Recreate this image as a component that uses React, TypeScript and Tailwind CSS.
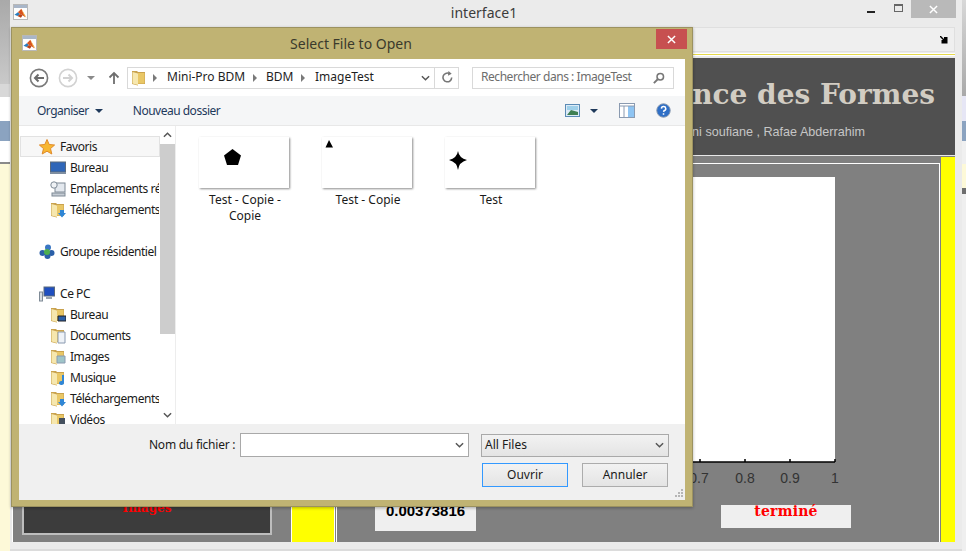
const ui = { fontFamily: '"Noto Sans", "Open Sans", sans-serif' };

function MatlabIcon({ className }: { className: string }) {
  return (
    <div className={className}>
      <div className="h-[3px] bg-[#a9b6c8]" />
      <svg viewBox="0 0 15 12" className="w-full h-[11px] bg-white">
        <path d="M0.5 7.5 L4.5 4.5 L7 6.5 L4 9 Z" fill="#2a7fc0" />
        <path d="M4.5 4.5 L8.5 0.5 L10.5 5 L13 10.5 L10 8 L7 6.5 Z" fill="#d9531e" />
        <path d="M8.5 0.5 L10.5 4 L14.5 11 L11.5 8 Z" fill="#f0a030" />
        <path d="M4 9 L7 6.5 L10 8 L8 11 Z" fill="#b8431a" />
      </svg>
    </div>
  );
}

function Folder({ overlay }: { overlay?: string }) {
  return (
    <svg viewBox="0 0 16 16" className="w-4 h-4 shrink-0">
      <path d="M1 1 H6 L7 2 H14 V14 H7 V15.5 L1 14 Z" fill="#c9a24e" />
      <path d="M7 3 H13.5 V13.5 H7 Z" fill="#e9c766" />
      <path d="M1.5 2 L7 3.5 V15 L1.5 13.5 Z" fill="#f6e7ae" />
      {overlay === "down" && <path d="M10 8 H14 V11 H16 L12 15.5 L8 11 H10 Z" fill="#2f86d6" />}
      {overlay === "desk" && <path d="M8 9 H16 V14 H8 Z" fill="#2a5fa8" stroke="#222" strokeWidth="1" />}
      {overlay === "doc" && <path d="M8 4 H15 V15 H8 Z" fill="#eef2f7" stroke="#8a9ab0" strokeWidth="1" />}
      {overlay === "img" && <path d="M7 7 H15 V14 H7 Z" fill="#9ec4c8" stroke="#8a9ab0" strokeWidth="1" />}
      {overlay === "music" && <path d="M12 5 H14 V13 A2.5 2 0 1 1 12 11 Z" fill="#2f86d6" />}
      {overlay === "video" && <path d="M9 6 H15 V15 H9 Z" fill="#44505e" />}
    </svg>
  );
}

function NavRow({ label, children, sub, selected }: { label: string; children: React.ReactNode; sub?: boolean; selected?: boolean }) {
  return (
    <div
      className={`h-[21px] flex items-center overflow-hidden whitespace-nowrap text-[12px] tracking-[-0.45px] text-[#1a1a1a] border ${
        selected ? "border-[#e2e2e2] bg-[#f7f7f7]" : "border-transparent"
      } ${sub ? "pl-[29px] gap-[4px]" : "pl-[18px] gap-[5px]"}`}
    >
      {children}
      <span>{label}</span>
    </div>
  );
}

function Thumb({ label, children }: { label: string; children: React.ReactNode }) {
  return (
    <div className="w-[94px] flex flex-col items-center">
      <svg viewBox="0 0 90 51" className="w-[90px] h-[51px] bg-white shadow-[1px_1px_2px_rgba(0,0,0,0.45)]">
        {children}
      </svg>
      <div className="mt-[4px] pl-[2px] text-center text-[12px] leading-[16px] text-[#1a1a1a]">{label}</div>
    </div>
  );
}

function Chevron() {
  return (
    <svg viewBox="0 0 10 6" className="w-[9px] h-[6px]">
      <path d="M1 1 L5 5 L9 1" fill="none" stroke="#555" strokeWidth="1.6" />
    </svg>
  );
}

function Crumb() {
  return <div className="w-0 h-0 border-y-[4px] border-y-transparent border-l-[4px] border-l-[#7a7a7a]" />;
}

function Dialog() {
  return (
    <div
      className="absolute left-[11px] top-[27px] w-[682px] h-[480px] flex flex-col bg-[#c0b373] border border-[#9c9260] shadow-[0_1px_3px_rgba(0,0,0,0.3)]"
      style={ui}
    >
      <div className="h-[31px] shrink-0 flex items-center justify-center relative">
        <MatlabIcon className="absolute left-[10px] top-[7px] w-[15px] border border-[#b8b8b8]" />
        <span className="text-[14px] text-[#3a3a2c] -ml-[2px]">Select File to Open</span>
        <div className="absolute right-[5px] top-[1px] w-[31px] h-[20px] bg-[#c75050] flex items-center justify-center">
          <svg viewBox="0 0 10 10" className="w-[9px] h-[9px]">
            <path d="M1 1 L9 9 M9 1 L1 9" stroke="#fff" strokeWidth="1.6" />
          </svg>
        </div>
      </div>

      <div className="mx-[7px] mb-[6px] flex-1 flex flex-col bg-white min-h-0">
        {/* address bar */}
        <div className="h-[37px] shrink-0 flex items-center pl-[10px] pr-[11px]">
          <svg viewBox="0 0 20 20" className="w-[20px] h-[20px]">
            <circle cx="10" cy="10" r="8.6" fill="none" stroke="#7a7a7a" strokeWidth="1.6" />
            <path d="M15 10 H6 M9.5 6.5 L6 10 L9.5 13.5" fill="none" stroke="#6c6c6c" strokeWidth="2" />
          </svg>
          <svg viewBox="0 0 20 20" className="w-[20px] h-[20px] ml-[9px]">
            <circle cx="10" cy="10" r="8.6" fill="none" stroke="#d2d2d2" strokeWidth="1.6" />
            <path d="M5 10 H14 M10.5 6.5 L14 10 L10.5 13.5" fill="none" stroke="#d2d2d2" strokeWidth="2" />
          </svg>
          <div className="ml-[9px] w-0 h-0 border-x-[4px] border-x-transparent border-t-[4px] border-t-[#8a8a8a]" />
          <svg viewBox="0 0 12 14" className="w-[12px] h-[14px] ml-[13px]">
            <path d="M6 13 V2 M1.5 6.5 L6 2 L10.5 6.5" fill="none" stroke="#6e6e6e" strokeWidth="1.8" />
          </svg>
          <div className="ml-[7px] w-[332px] h-[22px] flex items-center border border-[#d9d9d9] text-[12px] leading-[18px] text-[#1e1e1e]">
            <div className="ml-[3px]"><Folder /></div>
            <div className="ml-[6px]"><Crumb /></div>
            <span className="ml-[10px] pb-[2px] w-[76px] whitespace-nowrap">Mini-Pro BDM</span>
            <div className="ml-[10px]"><Crumb /></div>
            <span className="ml-[9px] pb-[2px] w-[26px]">BDM</span>
            <div className="ml-[9px]"><Crumb /></div>
            <span className="ml-[10px] pb-[2px] w-[55px]">ImageTest</span>
            <div className="ml-[51px]"><Chevron /></div>
            <div className="ml-[4px] h-full w-px bg-[#d9d9d9]" />
            <svg viewBox="0 0 14 14" className="w-[13px] h-[13px] ml-[6px]">
              <path d="M11.5 7 A4.7 4.7 0 1 1 9 2.8" fill="none" stroke="#777" strokeWidth="1.7" />
              <path d="M8 0 L11.5 3 L7.5 5 Z" fill="#777" />
            </svg>
          </div>
          <div className="ml-auto w-[202px] h-[22px] flex items-center justify-between px-[8px] border border-[#d9d9d9] text-[12px] leading-[18px] tracking-[-0.45px] text-[#6d6d6d] whitespace-nowrap">
            <span className="pb-[2px]">Rechercher dans : ImageTest</span>
            <svg viewBox="0 0 14 14" className="w-[12px] h-[12px]">
              <circle cx="8.5" cy="5.5" r="3.8" fill="none" stroke="#777" strokeWidth="1.8" />
              <path d="M5.5 8.5 L1 13" stroke="#777" strokeWidth="2.2" />
            </svg>
          </div>
        </div>

        {/* command bar */}
        <div className="h-[30px] shrink-0 flex items-center bg-[#f5f6f7] border-b border-[#e8e8e8] pl-[18px] pr-[14px] text-[12px] tracking-[-0.5px] text-[#1e395b]">
          <span>Organiser</span>
          <div className="ml-[6px] w-0 h-0 border-x-[4px] border-x-transparent border-t-[4px] border-t-[#1e395b]" />
          <span className="ml-[30px]">Nouveau dossier</span>
          <svg viewBox="0 0 15 13" className="ml-auto w-[15px] h-[13px]">
            <rect x="0.5" y="0.5" width="14" height="12" fill="#dcebf7" stroke="#5b8bb5" />
            <rect x="2" y="2" width="11" height="4" fill="#9fd0ea" />
            <path d="M2 11 L6 6 L13 8 V11 Z" fill="#3f7f52" />
          </svg>
          <div className="ml-[10px] w-0 h-0 border-x-[4px] border-x-transparent border-t-[4px] border-t-[#1e395b]" />
          <svg viewBox="0 0 16 15" className="ml-[21px] w-[16px] h-[15px]">
            <rect x="0.5" y="0.5" width="15" height="14" fill="#fff" stroke="#8a9ab0" />
            <rect x="9" y="3" width="6" height="11" fill="#8ec4f2" />
            <path d="M0 3 H16 M5 3 V15" stroke="#8a9ab0" />
          </svg>
          <svg viewBox="0 0 16 16" className="ml-[21px] w-[15px] h-[15px]">
            <circle cx="8" cy="8" r="7.2" fill="#2f6fc6" stroke="#8a9ab0" />
            <path d="M5.8 6 A2.3 2.2 0 1 1 8.6 8.2 L8 9.5 M8 11 V12.6" fill="none" stroke="#fff" strokeWidth="1.6" />
          </svg>
        </div>

        {/* list area */}
        <div className="flex-1 min-h-0 flex">
          <div className="w-[157px] shrink-0 flex border-r border-[#ededed]">
            <div className="w-[141px] shrink-0 pt-[10px] pl-px overflow-hidden">
              <NavRow label="Favoris" selected>
                <svg viewBox="0 0 16 16" className="w-4 h-4 shrink-0">
                  <path d="M8 0.5 L10.2 5.5 L15.6 6 L11.5 9.6 L12.8 15 L8 12.2 L3.2 15 L4.5 9.6 L0.4 6 L5.8 5.5 Z" fill="#f7b733" stroke="#e08a2a" />
                </svg>
              </NavRow>
              <NavRow label="Bureau" sub>
                <svg viewBox="0 0 16 14" className="w-4 h-[14px] shrink-0">
                  <rect x="0.5" y="1" width="15" height="10" fill="#2f66b8" stroke="#5a6a7d" />
                  <rect x="0" y="11" width="16" height="2" fill="#7f8ea0" />
                </svg>
              </NavRow>
              <NavRow label="Emplacements récents" sub>
                <svg viewBox="0 0 16 16" className="w-4 h-4 shrink-0">
                  <rect x="5" y="2" width="10" height="9" fill="#e3e8ee" stroke="#7e8a96" />
                  <circle cx="4" cy="4" r="3.2" fill="#eef1f4" stroke="#7e8a96" />
                  <rect x="2" y="12" width="13" height="3" fill="#c5ccd4" stroke="#7e8a96" />
                </svg>
              </NavRow>
              <NavRow label="Téléchargements" sub><Folder overlay="down" /></NavRow>
              <div className="h-[21px]" />
              <NavRow label="Groupe résidentiel">
                <svg viewBox="0 0 16 16" className="w-4 h-4 shrink-0">
                  <circle cx="3.5" cy="9" r="3" fill="#2a5fa8" />
                  <circle cx="12.5" cy="9" r="3" fill="#2a5fa8" />
                  <circle cx="9" cy="3.5" r="3" fill="#3a77c4" />
                  <circle cx="8.5" cy="12" r="3" fill="#2a5fa8" />
                  <circle cx="8" cy="8" r="3" fill="#4cae4f" />
                </svg>
              </NavRow>
              <div className="h-[21px]" />
              <NavRow label="Ce PC">
                <svg viewBox="0 0 16 16" className="w-4 h-4 shrink-0">
                  <rect x="0.5" y="6" width="3" height="9" fill="#d6dbe0" stroke="#7e8a96" />
                  <rect x="5" y="1" width="10.5" height="9" fill="#1f4fc0" stroke="#5a6a7d" />
                  <rect x="7" y="11" width="6" height="2" fill="#9aa4ae" />
                </svg>
              </NavRow>
              <NavRow label="Bureau" sub><Folder overlay="desk" /></NavRow>
              <NavRow label="Documents" sub><Folder overlay="doc" /></NavRow>
              <NavRow label="Images" sub><Folder overlay="img" /></NavRow>
              <NavRow label="Musique" sub><Folder overlay="music" /></NavRow>
              <NavRow label="Téléchargements" sub><Folder overlay="down" /></NavRow>
              <NavRow label="Vidéos" sub><Folder overlay="video" /></NavRow>
            </div>
            <div className="w-[15px] shrink-0 flex flex-col items-center bg-white">
              <svg viewBox="0 0 10 6" className="w-[9px] h-[6px] mt-[6px]">
                <path d="M1 5 L5 1 L9 5" fill="none" stroke="#555" strokeWidth="1.6" />
              </svg>
              <div className="w-full h-[190px] mt-[6px] bg-[#cdcdcd]" />
              <div className="mt-[78px]"><Chevron /></div>
            </div>
          </div>
          <div className="flex-1 flex items-start gap-[29px] pl-[21px] pt-[11px]">
            <Thumb label="Test - Copie - Copie">
              <path d="M33.5 12 L42 18.5 L39 28 L28 28 L25 18.5 Z" fill="#000" />
            </Thumb>
            <Thumb label="Test - Copie">
              <path d="M7 3 L11 10.5 L3.5 10.5 Z" fill="#000" />
            </Thumb>
            <Thumb label="Test">
              <path d="M13 14 Q14 21 22 23 Q14 25 13 33 Q12 25 4 23 Q12 21 13 14 Z" fill="#000" />
            </Thumb>
          </div>
        </div>

        {/* footer */}
        <div className="h-[76px] shrink-0 bg-[#f0f0f0] relative pt-[9px] pl-[130px] text-[12px] text-[#1a1a1a]">
          <div className="flex items-center">
            <span className="w-[86px] whitespace-nowrap tracking-[-0.25px]">Nom du fichier :</span>
            <div className="ml-[5px] w-[229px] h-[24px] bg-white border border-[#a9a9a9] flex items-center justify-end pr-[4px]">
              <Chevron />
            </div>
            <div className="ml-[12px] w-[188px] h-[23px] bg-gradient-to-b from-[#f2f2f2] to-[#e4e4e4] border border-[#a9a9a9] flex items-center justify-between pl-[3px] pr-[4px]">
              <span>All Files</span>
              <Chevron />
            </div>
          </div>
          <div className="flex justify-end gap-[14px] mt-[6px] pr-[17px]">
            <div className="w-[86px] h-[24px] flex items-center justify-center bg-gradient-to-b from-[#f2f2f2] to-[#e4e4e4] border border-[#3399ff]">Ouvrir</div>
            <div className="w-[86px] h-[24px] flex items-center justify-center bg-gradient-to-b from-[#f2f2f2] to-[#e4e4e4] border border-[#acacac]">Annuler</div>
          </div>
          <svg viewBox="0 0 8 8" className="absolute right-[2px] bottom-[3px] w-[8px] h-[8px]">
            <path d="M6 0 H8 V2 H6 Z M3 3 H5 V5 H3 Z M6 3 H8 V5 H6 Z M0 6 H2 V8 H0 Z M3 6 H5 V8 H3 Z M6 6 H8 V8 H6 Z" fill="#b5b5b5" />
          </svg>
        </div>
      </div>
    </div>
  );
}

function MainWindow() {
  return (
    <div className="w-[952px] shrink-0 flex flex-col bg-[#ebebeb] border-b-2 border-[#dcdcdc]">
      <div className="h-[27px] shrink-0 flex relative items-center justify-center" style={ui}>
        <MatlabIcon className="absolute left-[3px] top-[4px] w-[15px] border border-[#b8b8b8]" />
        <span className="text-[14px] text-[#3c3c3c] -mt-[3px] -ml-[4px]">interface1</span>
        <div className="absolute left-[857px] top-[11px] w-[8px] h-[2px] bg-[#222]" />
        <div className="absolute left-[884px] top-[4px] w-[9px] h-[8px] border border-[#666] border-t-2" />
        <div className="absolute left-[901px] top-0 w-[45px] h-[18px] bg-[#b9b9b9] flex items-center justify-center">
          <svg viewBox="0 0 10 10" className="w-[9px] h-[9px]">
            <path d="M1 1 L9 9 M9 1 L1 9" stroke="#fff" strokeWidth="1.6" />
          </svg>
        </div>
      </div>
      <div className="flex-1 min-h-0 ml-[2px] mr-[7px] mb-[7px] flex flex-col">
        <div className="h-[25px] shrink-0 bg-[#efefef] border border-[#dfdfdf] flex items-center justify-end pr-[6px]">
          <svg viewBox="0 0 8 8" className="w-[8px] h-[8px]">
            <path d="M0 0 L1 0 L4 3 L4 1 L7.5 1 L7.5 7.5 L1.5 7.5 L1.5 4 L3 4 L0 1 Z" fill="#000" />
          </svg>
        </div>
        <div className="h-[1px] shrink-0 mt-[1px] bg-[#fff]" />
        <div className="h-[1px] shrink-0 bg-[#e6d94a]" />
        <div className="h-[1px] shrink-0 bg-[#fff]" />
        <div className="h-[99px] shrink-0 mt-[1px] bg-[#505050] border-y border-[#e8e8e8] flex flex-col items-end pr-[20px]">
          <div className="mt-[21px] text-[28px] leading-[32px] font-bold text-[#d2cdc3] whitespace-nowrap" style={{ fontFamily: '"DejaVu Serif", serif' }}>
            nce des Formes
          </div>
          <div className="mt-[14px] mr-[70px] text-[12.6px] leading-[14px] text-[#c6c6c6] whitespace-nowrap" style={{ fontFamily: '"Liberation Sans", sans-serif' }}>
            ni soufiane , Rafae Abderrahim
          </div>
        </div>
        <div className="flex-1 min-h-0 flex bg-[#808080]" style={{ fontFamily: '"Liberation Sans", sans-serif' }}>
          <div className="w-[280px] shrink-0 flex items-end border-x border-white pl-[9px] pb-[7px]">
            <div className="w-[250px] h-[60px] bg-[#3c3c3c] border-2 border-[#bdbdbd] flex justify-center">
              <span className="mt-[23px] h-[16px] text-[12px] leading-[16px] font-bold text-[#ff0000]" style={{ fontFamily: '"DejaVu Serif", serif' }}>Images</span>
            </div>
          </div>
          <div className="w-[43px] shrink-0 bg-[#ffff00] border-r border-white" />
          <div className="flex-1 min-w-0 flex flex-col border-x border-t border-white mt-[7px] ml-[1px] mr-[1px]">
            <svg viewBox="0 0 350 310" className="w-[350px] h-[310px] ml-[163px] mt-[13px] shrink-0">
              <rect x="0" y="0" width="335" height="285" fill="#fff" />
              <path d="M0 285 H335 M200 282 V285 M245 282 V285 M290 282 V285 M335 282 V285" stroke="#000" strokeWidth="1.5" fill="none" />
              <text x="199" y="306" textAnchor="middle" fontSize="14" fill="#333">0.7</text>
              <text x="245" y="306" textAnchor="middle" fontSize="14" fill="#333">0.8</text>
              <text x="290" y="306" textAnchor="middle" fontSize="14" fill="#333">0.9</text>
              <text x="335" y="306" textAnchor="middle" fontSize="14" fill="#333">1</text>
            </svg>
            <div className="flex items-start mt-[16px]">
              <div className="ml-[38px] w-[101px] h-[28px] bg-[#efefef] flex justify-center">
                <span className="text-[15px] leading-[16px] font-bold text-black">0.00373816</span>
              </div>
              <div className="ml-[245px] mt-[2px] w-[130px] h-[23px] bg-[#efefef] flex justify-center">
                <span className="text-[14px] leading-[13px] font-bold tracking-[0.2px] text-[#ff0000]" style={{ fontFamily: '"DejaVu Serif", serif' }}>terminé</span>
              </div>
            </div>
          </div>
          <div className="w-[14px] shrink-0 bg-[#ffff00] mt-[1px]" />
        </div>
      </div>
    </div>
  );
}

export default function App() {
  return (
    <div className="relative w-[966px] h-[551px] overflow-hidden flex bg-[#f0f0f0]">
      <div className="w-[10px] shrink-0 flex flex-col">
        <div className="h-[84px] bg-gradient-to-b from-[#a9a9a9] to-[#c9c9c9]" />
        <div className="h-[13px] bg-[#d8d8d8]" />
        <div className="h-[24px] bg-white" />
        <div className="h-[20px] bg-[#8ba3c0]" />
        <div className="h-[21px] bg-white" />
        <div className="h-[2px] bg-[#8a8a8a]" />
        <div className="flex-1 bg-[#fdf9d8]" />
      </div>
      <MainWindow />
      <div className="w-[4px] shrink-0 flex flex-col">
        <div className="h-[96px] bg-gradient-to-b from-[#d8d8d8] to-[#a9a9a9]" />
        <div className="h-[25px] bg-[#e6e6f5]" />
        <div className="h-[20px] bg-[#8ba3c0]" />
        <div className="h-[23px] bg-[#f0f0f0]" />
        <div className="h-[24px] bg-[#fdf9d8]" />
        <div className="h-[6px] bg-[#6e6e6e]" />
        <div className="flex-1 bg-[#efefef]" />
      </div>
      <Dialog />
    </div>
  );
}
